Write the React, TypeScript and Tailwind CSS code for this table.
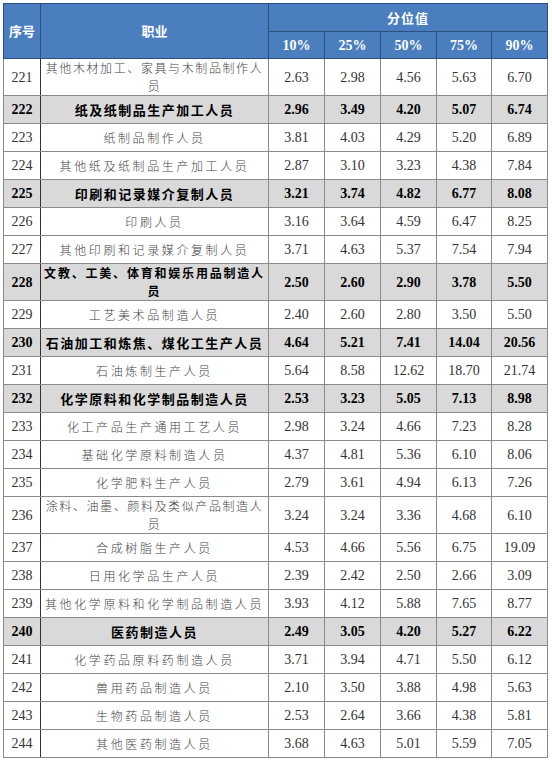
import React from "react";

type Row = { id: number; name: string; v: string[]; bold?: boolean; wrap?: [string, string] };

const rows: Row[] = [
  { id: 221, name: "", wrap: ["其他木材加工、家具与木制品制作人", "员"], v: ["2.63", "2.98", "4.56", "5.63", "6.70"] },
  { id: 222, name: "纸及纸制品生产加工人员", bold: true, v: ["2.96", "3.49", "4.20", "5.07", "6.74"] },
  { id: 223, name: "纸制品制作人员", v: ["3.81", "4.03", "4.29", "5.20", "6.89"] },
  { id: 224, name: "其他纸及纸制品生产加工人员", v: ["2.87", "3.10", "3.23", "4.38", "7.84"] },
  { id: 225, name: "印刷和记录媒介复制人员", bold: true, v: ["3.21", "3.74", "4.82", "6.77", "8.08"] },
  { id: 226, name: "印刷人员", v: ["3.16", "3.64", "4.59", "6.47", "8.25"] },
  { id: 227, name: "其他印刷和记录媒介复制人员", v: ["3.71", "4.63", "5.37", "7.54", "7.94"] },
  { id: 228, name: "", bold: true, wrap: ["文教、工美、体育和娱乐用品制造人", "员"], v: ["2.50", "2.60", "2.90", "3.78", "5.50"] },
  { id: 229, name: "工艺美术品制造人员", v: ["2.40", "2.60", "2.80", "3.50", "5.50"] },
  { id: 230, name: "石油加工和炼焦、煤化工生产人员", bold: true, v: ["4.64", "5.21", "7.41", "14.04", "20.56"] },
  { id: 231, name: "石油炼制生产人员", v: ["5.64", "8.58", "12.62", "18.70", "21.74"] },
  { id: 232, name: "化学原料和化学制品制造人员", bold: true, v: ["2.53", "3.23", "5.05", "7.13", "8.98"] },
  { id: 233, name: "化工产品生产通用工艺人员", v: ["2.98", "3.24", "4.66", "7.23", "8.28"] },
  { id: 234, name: "基础化学原料制造人员", v: ["4.37", "4.81", "5.36", "6.10", "8.06"] },
  { id: 235, name: "化学肥料生产人员", v: ["2.79", "3.61", "4.94", "6.13", "7.26"] },
  { id: 236, name: "", wrap: ["涂料、油墨、颜料及类似产品制造人", "员"], v: ["3.24", "3.24", "3.36", "4.68", "6.10"] },
  { id: 237, name: "合成树脂生产人员", v: ["4.53", "4.66", "5.56", "6.75", "19.09"] },
  { id: 238, name: "日用化学品生产人员", v: ["2.39", "2.42", "2.50", "2.66", "3.09"] },
  { id: 239, name: "其他化学原料和化学制品制造人员", v: ["3.93", "4.12", "5.88", "7.65", "8.77"] },
  { id: 240, name: "医药制造人员", bold: true, v: ["2.49", "3.05", "4.20", "5.27", "6.22"] },
  { id: 241, name: "化学药品原料药制造人员", v: ["3.71", "3.94", "4.71", "5.50", "6.12"] },
  { id: 242, name: "兽用药品制造人员", v: ["2.10", "3.50", "3.88", "4.98", "5.63"] },
  { id: 243, name: "生物药品制造人员", v: ["2.53", "2.64", "3.66", "4.38", "5.81"] },
  { id: 244, name: "其他医药制造人员", v: ["3.68", "4.63", "5.01", "5.59", "7.05"] },
];

const serif = "font-['Liberation_Serif','Noto_Sans_CJK_SC',serif]";
const cjk = "font-['Noto_Sans_CJK_SC',sans-serif]";

export default function App() {
  return (
    <div className="bg-white w-[552px] h-[763px] pl-[3px] pt-[3px]">
      <table className="border-collapse table-fixed w-[544px] border border-[#555]">
        <colgroup>
          <col className="w-[37px]" />
          <col className="w-[228px]" />
          <col className="w-[56px]" />
          <col className="w-[56px]" />
          <col className="w-[56px]" />
          <col className="w-[55px]" />
          <col className="w-[56px]" />
        </colgroup>
        <thead>
          <tr className="h-[28px] bg-[#4a7ebe] text-white">
            <th rowSpan={2} className={`${cjk} text-[13px] font-bold border border-[#2b4f7e] p-0`}>序号</th>
            <th rowSpan={2} className={`${cjk} text-[13px] font-bold border border-[#2b4f7e] p-0`}>职业</th>
            <th colSpan={5} className={`${cjk} text-[13px] font-bold border border-[#2b4f7e] p-0 tracking-[1px]`}>分位值</th>
          </tr>
          <tr className="h-[27px] bg-[#4a7ebe] text-white">
            {["10%", "25%", "50%", "75%", "90%"].map((p) => (
              <th key={p} className={`${serif} text-[14px] font-bold border border-[#2b4f7e] p-0`}>{p}</th>
            ))}
          </tr>
        </thead>
        <tbody>
          {rows.map((r) => (
            <tr key={r.id} className={`${r.wrap ? "h-[36px]" : "h-[28px]"} ${r.bold ? "bg-[#d9d9d9] text-black" : "bg-white text-[#333]"}`}>
              <td className={`${serif} text-[14px] text-center border border-[#8a8a8a] border-r-[#333] p-0 ${r.bold ? "font-bold" : ""}`}>{r.id}</td>
              <td className={`${cjk} text-center border border-[#8a8a8a] px-0 py-0 ${r.wrap ? "leading-[18px]" : "leading-[16px]"} ${r.bold ? (r.wrap ? "font-bold text-[12px]" : "font-bold text-[13px] tracking-[1.5px]") : "font-light text-[12px] tracking-[2.6px] text-[#444]"}`}>
                {r.wrap ? (
                  <span className={r.bold ? "tracking-[1.8px]" : "tracking-[1.6px]"}>
                    {r.wrap[0]}
                    <br />
                    {r.wrap[1]}
                  </span>
                ) : (
                  r.name
                )}
              </td>
              {r.v.map((x, i) => (
                <td key={i} className={`${serif} text-[14px] text-center border border-[#8a8a8a] p-0 ${r.bold ? "font-bold" : ""}`}>{x}</td>
              ))}
            </tr>
          ))}
        </tbody>
      </table>
    </div>
  );
}
